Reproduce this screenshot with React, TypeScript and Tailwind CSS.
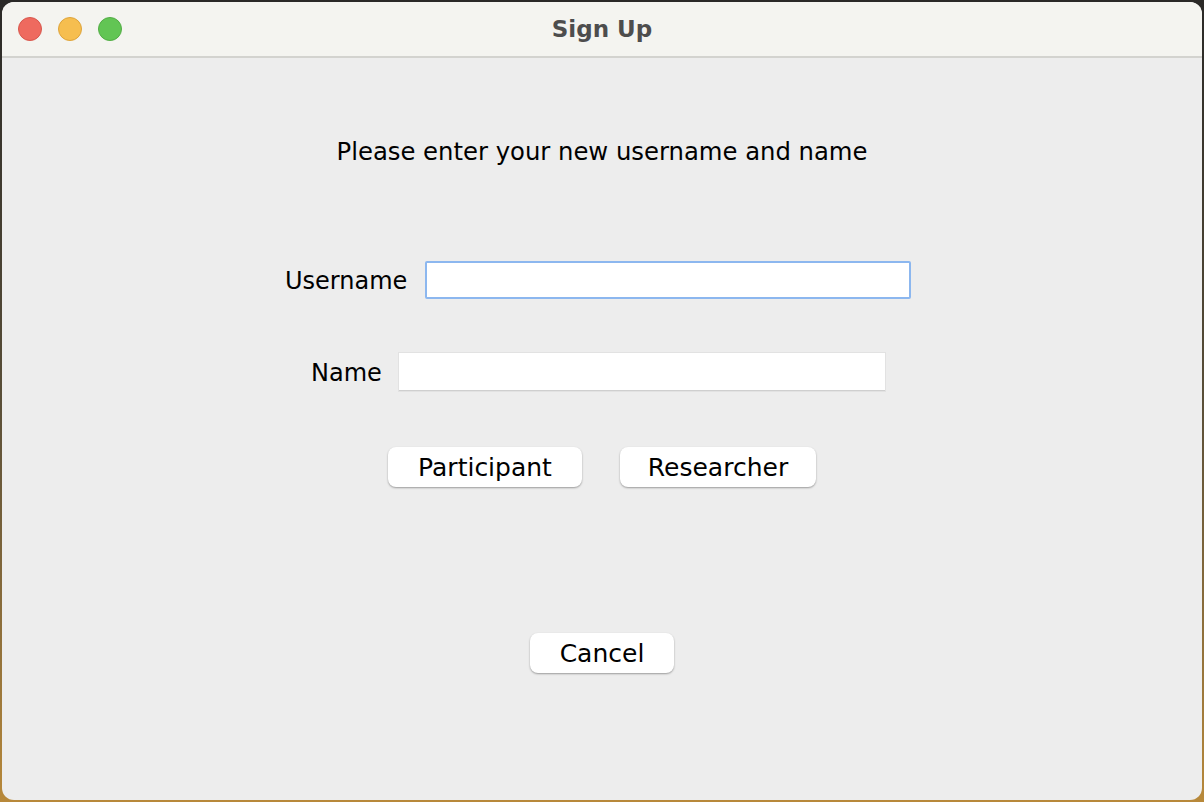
export default function App() {
  return (
    <div className="w-[1204px] h-[802px] bg-gradient-to-b from-[#2a2927] via-[#5a4f38] to-[#b8893a] p-[2px] font-['DejaVu_Sans',sans-serif]">
      <div className="w-[1200px] h-[798px] rounded-[12px] overflow-hidden bg-[#ededed] flex flex-col">
        {/* Title bar */}
        <div className="h-[56px] bg-[#f4f4f0] border-b-2 border-[#d3d3cf] flex items-center relative shrink-0">
          <div className="flex gap-[16px] pl-[16px]">
            <span className="w-[24px] h-[24px] rounded-full bg-[#ee6a5f] border border-[#d8574d]" />
            <span className="w-[24px] h-[24px] rounded-full bg-[#f6be4f] border border-[#dea43b]" />
            <span className="w-[24px] h-[24px] rounded-full bg-[#62c554] border border-[#52ad45]" />
          </div>
          <div className="absolute inset-0 flex items-center justify-center text-[23px] font-bold text-[#4d4d4d] pt-[1px]">
            Sign Up
          </div>
        </div>

        {/* Content */}
        <div className="flex flex-col text-black">
          <div className="mt-[79px] text-center text-[24.3px] leading-[30px]">
            Please enter your new username and name
          </div>

          <div className="mt-[94px] flex items-center pl-[283px]">
            <label className="text-[24px] w-[140px] pt-[2px]">Username</label>
            <input className="w-[486px] h-[38px] bg-white border-2 border-[#8cb7ef] rounded-[2px] outline-none" />
          </div>

          <div className="mt-[54px] flex items-center pl-[309px]">
            <label className="text-[24px] w-[88px] pt-[2px]">Name</label>
            <input className="w-[486px] h-[38px] bg-white border-b border-[#cfcfcf] shadow-[0_0_0_1px_#e2e2e2] outline-none" />
          </div>

          <div className="mt-[56px] flex pl-[386px] gap-[38px]">
            <button className="w-[194px] h-[40px] bg-white rounded-[8px] shadow-[0_1px_2px_rgba(0,0,0,0.35)] text-[25px] pt-[1px]">
              Participant
            </button>
            <button className="w-[196px] h-[40px] bg-white rounded-[8px] shadow-[0_1px_2px_rgba(0,0,0,0.35)] text-[25px] pt-[1px]">
              Researcher
            </button>
          </div>

          <div className="mt-[146px] flex justify-center">
            <button className="w-[144px] h-[40px] bg-white rounded-[8px] shadow-[0_1px_2px_rgba(0,0,0,0.35)] text-[25px] pt-[1px]">
              Cancel
            </button>
          </div>
        </div>
      </div>
    </div>
  );
}
